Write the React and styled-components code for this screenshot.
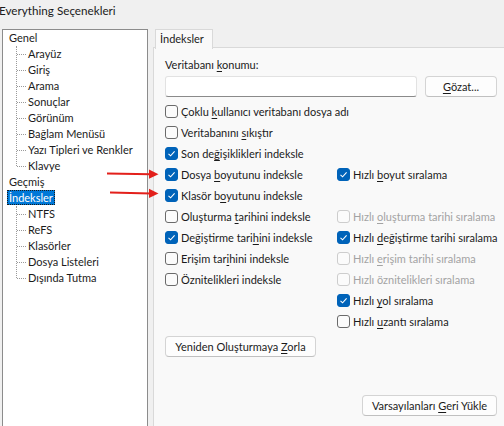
import React from "react"
import styled, { createGlobalStyle } from "styled-components"

const GlobalStyle = createGlobalStyle`
  html, body {
    margin: 0;
    padding: 0;
    overflow: hidden;
    background: #f0f0f0;
  }
  body {
    font-family: Lato, "Noto Sans", sans-serif;
    font-size: 11px;
    color: #1b1b1b;
  }
`

const treeItems = [
  { label: "Genel", children: ["Arayüz", "Giriş", "Arama", "Sonuçlar", "Görünüm", "Bağlam Menüsü", "Yazı Tipleri ve Renkler", "Klavye"] },
  { label: "Geçmiş" },
  { label: "İndeksler", selected: true, children: ["NTFS", "ReFS", "Klasörler", "Dosya Listeleri", "Dışında Tutma"] },
]

// [label, mnemonic index, checked, disabled]
const leftChecks = [
  ["Son değişiklikleri indeksle", 6, true],
  ["Dosya boyutunu indeksle", 6, true],
  ["Klasör boyutunu indeksle", 8, true],
  ["Oluşturma tarihini indeksle", 10, false],
  ["Değiştirme tarihini indeksle", 15, true],
  ["Erişim tarihini indeksle", 10, false],
  ["Öznitelikleri indeksle", -1, false],
  null,
  null,
]

const rightChecks = [
  null,
  ["Hızlı boyut sıralama", 6, true],
  null,
  ["Hızlı oluşturma tarihi sıralama", 6, false, true],
  ["Hızlı değiştirme tarihi sıralama", 6, true],
  ["Hızlı erişim tarihi sıralama", 6, false, true],
  ["Hızlı öznitelikleri sıralama", -1, false, true],
  ["Hızlı yol sıralama", 6, true],
  ["Hızlı uzantı sıralama", 6, false],
]

const Label = ({ text, at }) =>
  at < 0 ? (
    text
  ) : (
    <>
      {text.slice(0, at)}
      <Key>{text[at]}</Key>
      {text.slice(at + 1)}
    </>
  )

const Check = ({ item, span }) => {
  if (!item) return <span />
  const [text, at, checked, disabled] = item
  return (
    <CheckRow $disabled={disabled} $span={span}>
      <Box $checked={checked} $disabled={disabled}>
        {checked && (
          <svg width="11" height="11" viewBox="0 0 11 11">
            <polyline points="2.5,5.8 4.6,7.8 8.6,3.4" fill="none" stroke="#fff" strokeWidth="1.1" />
          </svg>
        )}
      </Box>
      <span>
        <Label text={text} at={at} />
      </span>
    </CheckRow>
  )
}

export default () => {
  return (
    <Window>
      <GlobalStyle />
      <Title>Everything Seçenekleri</Title>
      <Body>
        <Tree>
          {treeItems.map((item) => (
            <React.Fragment key={item.label}>
              <TreeRow>
                <TreeText $selected={item.selected}>{item.label}</TreeText>
              </TreeRow>
              {item.children && (
                <TreeGroup>
                  {item.children.map((child) => (
                    <TreeRow key={child} $child>
                      <TreeText>{child}</TreeText>
                    </TreeRow>
                  ))}
                </TreeGroup>
              )}
            </React.Fragment>
          ))}
        </Tree>

        <TabArea>
          <TabStrip>
            <Tab>İndeksler</Tab>
          </TabStrip>
          <Panel>
            <FieldLabel>
              Veritabanı <Key>k</Key>onumu:
            </FieldLabel>
            <PathRow>
              <PathInput />
              <Button $width="72px">
                <Key>G</Key>özat...
              </Button>
            </PathRow>

            <CheckGrid>
              <Check item={["Çoklu kullanıcı veritabanı dosya adı", 6]} span />
              <Check item={["Veritabanını sıkıştır", 13]} span />
              {leftChecks.map((c, i) => (
                <React.Fragment key={i}>
                  <Check item={c} />
                  <Check item={rightChecks[i]} />
                </React.Fragment>
              ))}
            </CheckGrid>

            <Button $width="151px" $top="4px">
              Yeniden Oluşturmaya <Key>Z</Key>orla
            </Button>
            <Footer>
              <Button $width="135px">
                Varsayılanları <Key>G</Key>eri Yükle
              </Button>
            </Footer>
          </Panel>
        </TabArea>
      </Body>

      <Arrows width="504" height="426" viewBox="0 0 504 426">
        <g fill="#e3201b" stroke="#e3201b">
          <line x1="107" y1="173.6" x2="151" y2="174.2" strokeWidth="2" />
          <polygon points="149,169.6 158.5,174.2 149,178.8" stroke="none" />
          <line x1="110" y1="192.4" x2="151" y2="193.4" strokeWidth="2" />
          <polygon points="149,188.8 158.5,193.4 149,198" stroke="none" />
        </g>
      </Arrows>
    </Window>
  )
}

const Window = styled.div`
  position: relative;
  width: 504px;
  height: 440px;
  display: flex;
  flex-direction: column;
`

const Title = styled.div`
  height: 21px;
  line-height: 20px;
  margin-left: -1px;
  font-size: 11.7px;
  color: #1b1b1b;
  white-space: nowrap;
`

const Body = styled.div`
  flex: 1;
  display: flex;
  padding: 8px 0 0 2px;
  min-width: 0;
`

const Tree = styled.div`
  box-sizing: border-box;
  flex: 0 0 146px;
  width: 146px;
  border: 1px solid #8c8c8c;
  background: #fff;
  white-space: nowrap;
`

const TreeGroup = styled.div`
  position: relative;

  &::before {
    content: "";
    position: absolute;
    left: 13px;
    top: 0;
    bottom: 8px;
    border-left: 1px dotted #9a9a9a;
  }
`

const TreeRow = styled.div`
  position: relative;
  height: 16px;
  line-height: 15px;
  padding-left: ${(p) => (p.$child ? "23px" : "4px")};

  ${(p) =>
    p.$child &&
    `
    &::before {
      content: "";
      position: absolute;
      left: 14px;
      top: 8px;
      width: 9px;
      border-top: 1px dotted #9a9a9a;
    }
  `}
`

const TreeText = styled.span`
  display: inline-block;
  height: 15px;
  padding: 0 2px;
  ${(p) =>
    p.$selected &&
    `
    background: #0078d7;
    color: #fff;
    outline: 1px dotted #1b1b1b;
    outline-offset: -1px;
  `}
`

const TabArea = styled.div`
  flex: 1;
  min-width: 0;
  display: flex;
  flex-direction: column;
  margin-left: 5px;
`

const TabStrip = styled.div`
  height: 18px;
  display: flex;
  padding-left: 2px;
`

const Tab = styled.div`
  position: relative;
  z-index: 1;
  height: 19px;
  line-height: 17px;
  padding: 0 8px 0 4px;
  background: #f9f9f9;
  border: 1px solid #d9d9d9;
  border-bottom: none;
`

const Panel = styled.div`
  flex: 1;
  display: flex;
  flex-direction: column;
  align-items: flex-start;
  background: #f9f9f9;
  border-top: 1px solid #d9d9d9;
  border-left: 1px solid #d9d9d9;
  padding: 9px 7px 0 11px;
`

const FieldLabel = styled.div`
  height: 16px;
  line-height: 16px;
`

const Key = styled.span`
  text-decoration: underline;
  text-underline-offset: 2px;
`

const PathRow = styled.div`
  display: flex;
  gap: 8px;
  margin-top: 3px;
  width: 100%;
`

const PathInput = styled.div`
  box-sizing: border-box;
  flex: 1;
  height: 21px;
  background: #fff;
  border: 1px solid #e2e2e2;
  border-bottom-color: #8a8a8a;
  border-radius: 3px;
`

const Button = styled.button`
  box-sizing: border-box;
  flex-shrink: 0;
  width: ${(p) => p.$width};
  height: 21px;
  margin-top: ${(p) => p.$top || 0};
  padding: 0;
  font: inherit;
  white-space: nowrap;
  color: #1b1b1b;
  background: #fdfdfd;
  border: 1px solid #d4d4d4;
  border-bottom-color: #c0c0c0;
  border-radius: 4px;
`

const CheckGrid = styled.div`
  display: grid;
  grid-template-columns: 172px 1fr;
  grid-auto-rows: 21px;
  margin-top: 4px;
  width: 100%;
`

const CheckRow = styled.label`
  display: flex;
  align-items: center;
  white-space: nowrap;
  grid-column: ${(p) => (p.$span ? "1 / -1" : "auto")};
  color: ${(p) => (p.$disabled ? "#a3a3a3" : "#1b1b1b")};
`

const Box = styled.span`
  box-sizing: border-box;
  width: 13px;
  height: 13px;
  margin: 0 3px 0 0;
  border-radius: 3px;
  display: flex;
  align-items: center;
  justify-content: center;
  flex-shrink: 0;
  background: ${(p) => (p.$checked ? "#0063b9" : "#fbfbfb")};
  border: 1px solid ${(p) => (p.$checked ? "#0063b9" : p.$disabled ? "#cdcdcd" : "#6a6a6a")};
`

const Footer = styled.div`
  align-self: stretch;
  display: flex;
  justify-content: flex-end;
  margin-top: 38px;
`

const Arrows = styled.svg`
  position: absolute;
  left: 0;
  top: 0;
  pointer-events: none;
`
